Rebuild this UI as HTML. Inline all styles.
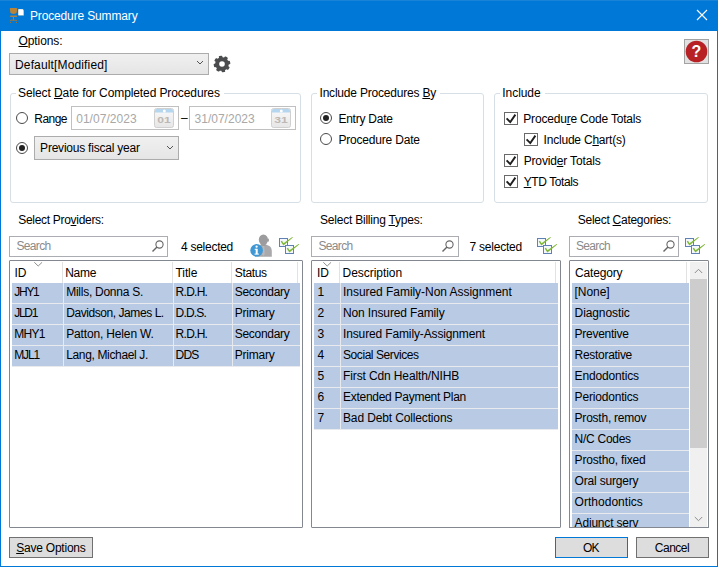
<!DOCTYPE html>
<html><head><meta charset="utf-8"><title>Procedure Summary</title>
<style>
html,body{margin:0;padding:0;background:#fff;}
body{width:718px;height:567px;overflow:hidden;font:12px "Liberation Sans",sans-serif;}
#win{position:relative;width:718px;height:567px;background:#fff;overflow:hidden;}
#win *{box-sizing:border-box;}
.a{position:absolute;}
.t{position:absolute;white-space:nowrap;font:12px/14px "Liberation Sans",sans-serif;}
.t u{text-decoration:underline;text-underline-offset:1px;text-decoration-thickness:1px;}
.gb{position:absolute;border:1px solid #d5dfe5;border-radius:3px;}
.gl{position:absolute;background:#fff;height:14px;}
.combo{position:absolute;border:1px solid #acacac;background:linear-gradient(#f0f0f0,#e5e5e5);}
.inp{position:absolute;border:1px solid #abadb3;background:#fff;}
.dinp{position:absolute;border:1px solid #c0c0c0;background:#fff;}
.rad{position:absolute;width:12px;height:12px;border:1px solid #4a4a4a;border-radius:50%;background:#fff;}
.rad.on::after{content:"";position:absolute;left:2px;top:2px;width:6px;height:6px;border-radius:50%;background:#222;}
.cb{position:absolute;width:14px;height:13px;border:1px solid #6a6a6a;background:#fff;}
.btn{position:absolute;border:1px solid #707070;background:#dddddd;}
.list{position:absolute;border:1px solid #828790;background:#fff;border-radius:1px;}
.row{position:absolute;height:21px;background:#b8cae4;border-bottom:1px solid #e9eaee;}
.vs{position:absolute;width:1px;background:#e9eaee;}
.hs{position:absolute;width:1px;background:#e2e2e2;}

</style></head>
<body>
<div id=win>
<!-- window frame -->
<div class=a style="left:0;top:0;width:718px;height:31px;background:#0078d7"></div>
<div class=a style="left:0;top:0;width:718px;height:1px;background:#1883d7"></div>
<div class=a style="left:0;top:31px;width:1px;height:536px;background:#0078d7"></div>
<div class=a style="left:717px;top:31px;width:1px;height:536px;background:#0078d7"></div>
<div class=a style="left:0;top:566px;width:718px;height:1px;background:#0078d7"></div>
<!-- title icon -->
<svg class=a style="left:8px;top:7px" width="18" height="17" viewBox="0 0 18 17">
 <path d="M2.6 1 H8.4 Q9.3 1 9.2 2 L8.7 5.2 Q8.3 7 5.5 7 Q2.7 7 2.3 5.2 L1.8 2 Q1.7 1 2.6 1Z" fill="#ba8336"/>
 <rect x="1.8" y="8.4" width="7.4" height="1.6" rx="0.8" fill="#b68238" opacity="0.92"/>
 <rect x="4.9" y="10" width="1.1" height="3.4" fill="#ad7830"/>
 <path d="M2 14.2 L2.6 13.2 L8.4 13.2 L9 14.2" stroke="#ad7830" stroke-width="0.9" fill="none"/>
 <circle cx="2.6" cy="15.4" r="0.65" fill="#a5722e"/>
 <circle cx="8.5" cy="15.4" r="0.65" fill="#a5722e"/>
 <rect x="10.4" y="2.3" width="5.4" height="6.3" fill="#ccd8c4"/>
 <rect x="10.4" y="2.3" width="4.8" height="5.7" fill="#fff"/>
 <path d="M14.6 2.3 L15.8 2.3 L15.8 3.5 Z" fill="#2f5f8f"/>
</svg>
<!-- close X -->
<svg class=a style="left:696px;top:9px" width="12" height="12" viewBox="0 0 12 12"><path d="M1 1 L11 11 M11 1 L1 11" stroke="#fff" stroke-width="1.1" fill="none"/></svg>

<!-- options combo -->
<div class=combo style="left:9px;top:53px;width:200px;height:22px"></div>
<svg class=a style="left:196px;top:60px" width="8" height="6" viewBox="0 0 8 6"><path d="M1 1 L4 4 L7 1" stroke="#555" stroke-width="1" fill="none"/></svg>
<!-- gear -->
<svg class=a style="left:213px;top:55px" width="18" height="18" viewBox="-9 -9 18 18">
 <g fill="#4b4c4e" transform="rotate(-11)">
  <circle r="6.8"/>
  <rect x="-1.8" y="-8.3" width="3.6" height="16.6" rx="0.9"/>
  <rect x="-1.8" y="-8.3" width="3.6" height="16.6" rx="0.9" transform="rotate(45)"/>
  <rect x="-1.8" y="-8.3" width="3.6" height="16.6" rx="0.9" transform="rotate(90)"/>
  <rect x="-1.8" y="-8.3" width="3.6" height="16.6" rx="0.9" transform="rotate(135)"/>
 </g>
 <circle r="2.8" fill="#fff"/>
</svg>
<!-- help button -->
<div class=a style="left:684px;top:39px;width:25px;height:25px;border:1px solid #a3a3a3;background:#e1e1e1"></div>
<svg class=a style="left:685px;top:40px" width="23" height="23" viewBox="0 0 23 23">
 <circle cx="11.5" cy="11.5" r="10.8" fill="#b72025"/>
 <text x="11.5" y="17" text-anchor="middle" font-family="Liberation Sans, sans-serif" font-weight="bold" font-size="16" fill="#fff">?</text>
</svg>

<!-- group boxes -->
<div class=gb style="left:10px;top:93px;width:291px;height:110px"></div>
<div class=gl style="left:16px;top:86px;width:208px"></div>
<div class=gb style="left:311px;top:93px;width:173px;height:110px"></div>
<div class=gl style="left:317px;top:86px;width:123px"></div>
<div class=gb style="left:494px;top:93px;width:214px;height:110px"></div>
<div class=gl style="left:500px;top:86px;width:45px"></div>

<!-- group 1 content -->
<div class=rad style="left:16px;top:112px"></div>
<div class=dinp style="left:71px;top:106px;width:108px;height:24px"></div>
<div class=dinp style="left:189px;top:106px;width:107px;height:24px"></div>
<svg class=a style="left:154px;top:108px" width="20" height="20" viewBox="0 0 20 20">
 <defs><linearGradient id="cg154" x1="0" y1="0" x2="0" y2="1"><stop offset="0" stop-color="#fafafa"/><stop offset="1" stop-color="#e6e6e6"/></linearGradient></defs>
 <rect x="0.5" y="0.5" width="19" height="19" rx="2" fill="url(#cg154)" stroke="#d0d0d0"/>
 <path d="M1 2.5 Q1 1 2.5 1 L17.5 1 Q19 1 19 2.5 L19 4.6 L1 4.6 Z" fill="#b4d6ee"/>
 <circle cx="10.3" cy="2.9" r="1.5" fill="#fff"/>
 <text x="10" y="15.2" text-anchor="middle" font-family="Liberation Sans, sans-serif" font-weight="bold" font-size="9.5" textLength="13.5" lengthAdjust="spacingAndGlyphs" fill="#bdb8b3">01</text>
</svg>
<svg class=a style="left:271px;top:108px" width="20" height="20" viewBox="0 0 20 20">
 <defs><linearGradient id="cg271" x1="0" y1="0" x2="0" y2="1"><stop offset="0" stop-color="#fafafa"/><stop offset="1" stop-color="#e6e6e6"/></linearGradient></defs>
 <rect x="0.5" y="0.5" width="19" height="19" rx="2" fill="url(#cg271)" stroke="#d0d0d0"/>
 <path d="M1 2.5 Q1 1 2.5 1 L17.5 1 Q19 1 19 2.5 L19 4.6 L1 4.6 Z" fill="#b4d6ee"/>
 <circle cx="10.3" cy="2.9" r="1.5" fill="#fff"/>
 <text x="10" y="15.2" text-anchor="middle" font-family="Liberation Sans, sans-serif" font-weight="bold" font-size="9.5" textLength="13.5" lengthAdjust="spacingAndGlyphs" fill="#bdb8b3">31</text>
</svg>
<div class="rad on" style="left:16px;top:142px"></div>
<div class=combo style="left:34px;top:136px;width:145px;height:24px"></div>
<svg class=a style="left:166px;top:145px" width="8" height="6" viewBox="0 0 8 6"><path d="M1 1 L4 4 L7 1" stroke="#555" stroke-width="1" fill="none"/></svg>

<!-- group 2 content -->
<div class="rad on" style="left:320px;top:112px"></div>
<div class=rad style="left:320px;top:133px"></div>

<!-- group 3 content -->
<div class=cb style="left:504px;top:112px"></div>
<div class=cb style="left:524px;top:133px"></div>
<div class=cb style="left:504px;top:154px"></div>
<div class=cb style="left:504px;top:175px"></div>
<svg class=a style="left:504px;top:112px" width="14" height="13" viewBox="0 0 14 13"><path d="M2.6 6.4 L6.3 10.1 L11.4 2.6" stroke="#1e1e1e" stroke-width="1.9" fill="none"/></svg>
<svg class=a style="left:524px;top:133px" width="14" height="13" viewBox="0 0 14 13"><path d="M2.6 6.4 L6.3 10.1 L11.4 2.6" stroke="#1e1e1e" stroke-width="1.9" fill="none"/></svg>
<svg class=a style="left:504px;top:154px" width="14" height="13" viewBox="0 0 14 13"><path d="M2.6 6.4 L6.3 10.1 L11.4 2.6" stroke="#1e1e1e" stroke-width="1.9" fill="none"/></svg>
<svg class=a style="left:504px;top:175px" width="14" height="13" viewBox="0 0 14 13"><path d="M2.6 6.4 L6.3 10.1 L11.4 2.6" stroke="#1e1e1e" stroke-width="1.9" fill="none"/></svg>

<!-- search boxes -->
<div class=inp style="left:9px;top:236px;width:159px;height:21px"></div>
<div class=inp style="left:311px;top:236px;width:148px;height:21px"></div>
<div class=inp style="left:569px;top:236px;width:110px;height:21px"></div>
<svg class=a style="left:151px;top:239px" width="14" height="14" viewBox="0 0 14 14"><circle cx="8.5" cy="5.5" r="3.6" fill="none" stroke="#666" stroke-width="1.1"/><path d="M6 8 L1.5 12.5" stroke="#666" stroke-width="1.4"/></svg>
<svg class=a style="left:441px;top:239px" width="14" height="14" viewBox="0 0 14 14"><circle cx="8.5" cy="5.5" r="3.6" fill="none" stroke="#666" stroke-width="1.1"/><path d="M6 8 L1.5 12.5" stroke="#666" stroke-width="1.4"/></svg>
<svg class=a style="left:662px;top:239px" width="14" height="14" viewBox="0 0 14 14"><circle cx="8.5" cy="5.5" r="3.6" fill="none" stroke="#666" stroke-width="1.1"/><path d="M6 8 L1.5 12.5" stroke="#666" stroke-width="1.4"/></svg>

<!-- person info icon -->
<svg class=a style="left:249px;top:234px" width="24" height="24" viewBox="0 0 24 24">
 <path d="M8.2 22.8 L8.2 15 Q8.2 12 10.6 11.2 L11.6 10.6 L17.2 10.6 L18.6 11.2 Q22.8 12.4 22.8 17 L22.8 22.8 Z" fill="#a9a9ab"/>
 <path d="M13.6 11.5 L15.2 11.5 L15.8 20 L14.4 22 L13 20 Z" fill="#b9b9bb"/>
 <ellipse cx="14.4" cy="5.8" rx="4.6" ry="5.2" fill="#9c9c9e"/>
 <rect x="18.3" y="4.6" width="1.6" height="3.2" rx="0.8" fill="#9c9c9e"/>
 <rect x="12.2" y="9.5" width="4.4" height="2.4" fill="#9c9c9e"/>
 <circle cx="7.6" cy="16.4" r="6.3" fill="#3f97d3"/>
 <rect x="6.7" y="14.8" width="2" height="5.4" fill="#fff"/>
 <rect x="5.7" y="14.8" width="2" height="1" fill="#fff"/>
 <rect x="5.5" y="19.6" width="4.4" height="1" fill="#fff"/>
 <circle cx="7.6" cy="12.7" r="1.15" fill="#fff"/>
</svg>
<!-- check-all icons -->
<svg class=a style="left:278px;top:236px" width="22" height="19" viewBox="0 0 22 19">
 <rect x="1.5" y="2.5" width="8" height="8" fill="#f4f7fb" stroke="#5f82b2" stroke-width="1"/>
 <rect x="7.5" y="9.5" width="8" height="8" fill="#f4f7fb" stroke="#5f82b2" stroke-width="1"/>
 <path d="M2.7 5.6 L4 4.7 L5.5 7.2 L14.3 0.9 L14.9 1.5 L5.4 9.5 Z" fill="#7db733"/>
 <path d="M8.7 12.6 L10 11.7 L11.5 14.2 L20.6 7.9 L21.2 8.5 L11.4 16.5 Z" fill="#7db733"/>
</svg>
<svg class=a style="left:536px;top:236px" width="22" height="19" viewBox="0 0 22 19">
 <rect x="1.5" y="2.5" width="8" height="8" fill="#f4f7fb" stroke="#5f82b2" stroke-width="1"/>
 <rect x="7.5" y="9.5" width="8" height="8" fill="#f4f7fb" stroke="#5f82b2" stroke-width="1"/>
 <path d="M2.7 5.6 L4 4.7 L5.5 7.2 L14.3 0.9 L14.9 1.5 L5.4 9.5 Z" fill="#7db733"/>
 <path d="M8.7 12.6 L10 11.7 L11.5 14.2 L20.6 7.9 L21.2 8.5 L11.4 16.5 Z" fill="#7db733"/>
</svg>
<svg class=a style="left:684px;top:236px" width="22" height="19" viewBox="0 0 22 19">
 <rect x="1.5" y="2.5" width="8" height="8" fill="#f4f7fb" stroke="#5f82b2" stroke-width="1"/>
 <rect x="7.5" y="9.5" width="8" height="8" fill="#f4f7fb" stroke="#5f82b2" stroke-width="1"/>
 <path d="M2.7 5.6 L4 4.7 L5.5 7.2 L14.3 0.9 L14.9 1.5 L5.4 9.5 Z" fill="#7db733"/>
 <path d="M8.7 12.6 L10 11.7 L11.5 14.2 L20.6 7.9 L21.2 8.5 L11.4 16.5 Z" fill="#7db733"/>
</svg>

<!-- providers list -->
<div class=list style="left:9px;top:260px;width:294px;height:268px"></div>
<div class=row style="left:12px;top:283px;width:288px"></div>
<div class=row style="left:12px;top:304px;width:288px"></div>
<div class=row style="left:12px;top:325px;width:288px"></div>
<div class=row style="left:12px;top:346px;width:288px"></div>
<div class=hs style="left:62px;top:262px;height:21px"></div>
<div class=hs style="left:172px;top:262px;height:21px"></div>
<div class=hs style="left:231px;top:262px;height:21px"></div>
<div class=hs style="left:297px;top:262px;height:21px"></div>
<div class=vs style="left:63px;top:283px;height:83px"></div>
<div class=vs style="left:173px;top:283px;height:83px"></div>
<div class=vs style="left:232px;top:283px;height:83px"></div>
<svg class=a style="left:34px;top:262px" width="9" height="5" viewBox="0 0 9 5"><path d="M0.3 0.3 L4.2 4 L8.1 0.3" stroke="#8e8e8e" stroke-width="1" fill="none"/></svg>

<!-- billing list -->
<div class=list style="left:311px;top:260px;width:250px;height:268px"></div>
<div class=row style="left:314px;top:283px;width:244px"></div>
<div class=row style="left:314px;top:304px;width:244px"></div>
<div class=row style="left:314px;top:325px;width:244px"></div>
<div class=row style="left:314px;top:346px;width:244px"></div>
<div class=row style="left:314px;top:367px;width:244px"></div>
<div class=row style="left:314px;top:388px;width:244px"></div>
<div class=row style="left:314px;top:409px;width:244px"></div>
<div class=hs style="left:339px;top:262px;height:21px"></div>
<div class=hs style="left:555px;top:262px;height:21px"></div>
<div class=vs style="left:340px;top:283px;height:146px"></div>
<svg class=a style="left:323px;top:262px" width="9" height="5" viewBox="0 0 9 5"><path d="M0.3 0.3 L4.2 4 L8.1 0.3" stroke="#8e8e8e" stroke-width="1" fill="none"/></svg>

<!-- categories list -->
<div class=list style="left:569px;top:260px;width:140px;height:268px;overflow:hidden" id=catlist></div>
<div class=a style="left:572px;top:283px;width:117px;height:244px;overflow:hidden">
 <div class=row style="left:0;top:0;width:118px"></div>
 <div class=row style="left:0;top:21px;width:118px"></div>
 <div class=row style="left:0;top:42px;width:118px"></div>
 <div class=row style="left:0;top:63px;width:118px"></div>
 <div class=row style="left:0;top:84px;width:118px"></div>
 <div class=row style="left:0;top:105px;width:118px"></div>
 <div class=row style="left:0;top:126px;width:118px"></div>
 <div class=row style="left:0;top:147px;width:118px"></div>
 <div class=row style="left:0;top:168px;width:118px"></div>
 <div class=row style="left:0;top:189px;width:118px"></div>
 <div class=row style="left:0;top:210px;width:118px"></div>
 <div class=row style="left:0;top:231px;width:118px"></div>
</div>
<div class=hs style="left:686px;top:262px;height:21px"></div>
<!-- scrollbar -->
<div class=a style="left:690px;top:262px;width:17px;height:265px;background:#f0f0f0"></div>
<div class=a style="left:690px;top:279px;width:17px;height:169px;background:#cdcdcd"></div>
<svg class=a style="left:694px;top:268px" width="9" height="6" viewBox="0 0 9 6"><path d="M0.8 5 L4.5 1.3 L8.2 5" stroke="#8c8c8c" stroke-width="1" fill="none"/></svg>
<svg class=a style="left:694px;top:516px" width="9" height="6" viewBox="0 0 9 6"><path d="M0.8 1 L4.5 4.7 L8.2 1" stroke="#8c8c8c" stroke-width="1" fill="none"/></svg>

<!-- buttons -->
<div class=btn style="left:9px;top:537px;width:84px;height:21px"></div>
<div class=btn style="left:555px;top:537px;width:73px;height:21px;border-color:#0078d7"></div>
<div class=btn style="left:636px;top:537px;width:73px;height:21px"></div>

<span class=t style='left:30.0px;top:9.0px;letter-spacing:-0.150px;color:#fff'>Procedure Summary</span>
<span class=t style='left:18.5px;top:34.0px;letter-spacing:-0.088px;color:#000'><u>O</u>ptions:</span>
<span class=t style='left:15.0px;top:58.0px;letter-spacing:0.144px;color:#000'>Default[Modified]</span>
<span class=t style='left:18.0px;top:86.0px;letter-spacing:-0.101px;color:#000'>Select <u>D</u>ate for Completed Procedures</span>
<span class=t style='left:34.3px;top:111.6px;letter-spacing:-0.535px;color:#000'>Range</span>
<span class=t style='left:76.2px;top:111.6px;letter-spacing:0.034px;color:#a8a8a8'>01/07/2023</span>
<span class=t style='left:194.5px;top:111.6px;letter-spacing:0.014px;color:#a8a8a8'>31/07/2023</span>
<span class=t style='left:181.0px;top:110.6px;letter-spacing:-0.688px;color:#000'>–</span>
<span class=t style='left:40.1px;top:141.2px;letter-spacing:-0.222px;color:#000'>Previous fiscal year</span>
<span class=t style='left:319.5px;top:86.0px;letter-spacing:-0.202px;color:#000'>Include Procedures <u>B</u>y</span>
<span class=t style='left:338.4px;top:112.0px;letter-spacing:-0.230px;color:#000'>Entry Date</span>
<span class=t style='left:338.4px;top:133.0px;letter-spacing:-0.189px;color:#000'>Procedure Date</span>
<span class=t style='left:502.3px;top:86.0px;letter-spacing:-0.058px;color:#000'>Include</span>
<span class=t style='left:523.3px;top:112.0px;letter-spacing:-0.193px;color:#000'>Procedu<u>r</u>e Code Totals</span>
<span class=t style='left:543.6px;top:133.0px;letter-spacing:-0.211px;color:#000'>Include C<u>h</u>art(s)</span>
<span class=t style='left:523.7px;top:154.0px;letter-spacing:-0.157px;color:#000'>Provid<u>e</u>r Totals</span>
<span class=t style='left:523.7px;top:175.0px;letter-spacing:-0.417px;color:#000'><u>Y</u>TD Totals</span>
<span class=t style='left:18.3px;top:213.0px;letter-spacing:-0.306px;color:#000'>Select Pro<u>v</u>iders:</span>
<span class=t style='left:320.0px;top:213.0px;letter-spacing:-0.218px;color:#000'>Select Billing <u>T</u>ypes:</span>
<span class=t style='left:577.8px;top:213.0px;letter-spacing:-0.270px;color:#000'>Select <u>C</u>ategories:</span>
<span class=t style='left:16.5px;top:239.0px;letter-spacing:-0.672px;color:#8a8a8a'>Search</span>
<span class=t style='left:318.5px;top:239.0px;letter-spacing:-0.672px;color:#8a8a8a'>Search</span>
<span class=t style='left:576.0px;top:239.0px;letter-spacing:-0.672px;color:#8a8a8a'>Search</span>
<span class=t style='left:181.0px;top:240.0px;letter-spacing:-0.270px;color:#000'>4 selected</span>
<span class=t style='left:469.5px;top:240.0px;letter-spacing:-0.220px;color:#000'>7 selected</span>
<span class=t style='left:14.6px;top:266.0px;letter-spacing:-0.200px;color:#000'>ID</span>
<span class=t style='left:65.2px;top:266.0px;letter-spacing:-0.254px;color:#000'>Name</span>
<span class=t style='left:175.5px;top:266.0px;letter-spacing:-0.087px;color:#000'>Title</span>
<span class=t style='left:234.8px;top:266.0px;letter-spacing:-0.339px;color:#000'>Status</span>
<span class=t style='left:14.3px;top:285.0px;letter-spacing:-1.286px;color:#000'>JHY1</span>
<span class=t style='left:66.2px;top:285.0px;letter-spacing:-0.260px;color:#000'>Mills, Donna S.</span>
<span class=t style='left:175.6px;top:285.0px;letter-spacing:-0.733px;color:#000'>R.D.H.</span>
<span class=t style='left:234.8px;top:285.0px;letter-spacing:-0.308px;color:#000'>Secondary</span>
<span class=t style='left:14.3px;top:306.0px;letter-spacing:-1.304px;color:#000'>JLD1</span>
<span class=t style='left:66.2px;top:306.0px;letter-spacing:-0.433px;color:#000'>Davidson, James L.</span>
<span class=t style='left:175.6px;top:306.0px;letter-spacing:-0.824px;color:#000'>D.D.S.</span>
<span class=t style='left:234.8px;top:306.0px;letter-spacing:-0.221px;color:#000'>Primary</span>
<span class=t style='left:14.3px;top:327.0px;letter-spacing:-0.736px;color:#000'>MHY1</span>
<span class=t style='left:66.2px;top:327.0px;letter-spacing:-0.153px;color:#000'>Patton, Helen W.</span>
<span class=t style='left:175.6px;top:327.0px;letter-spacing:-0.733px;color:#000'>R.D.H.</span>
<span class=t style='left:234.8px;top:327.0px;letter-spacing:-0.308px;color:#000'>Secondary</span>
<span class=t style='left:14.3px;top:348.0px;letter-spacing:-1.186px;color:#000'>MJL1</span>
<span class=t style='left:66.2px;top:348.0px;letter-spacing:-0.349px;color:#000'>Lang, Michael J.</span>
<span class=t style='left:175.6px;top:348.0px;letter-spacing:-0.848px;color:#000'>DDS</span>
<span class=t style='left:234.8px;top:348.0px;letter-spacing:-0.221px;color:#000'>Primary</span>
<span class=t style='left:317.0px;top:266.0px;letter-spacing:-0.200px;color:#000'>ID</span>
<span class=t style='left:342.6px;top:266.0px;letter-spacing:-0.048px;color:#000'>Description</span>
<span class=t style='left:317.4px;top:285.0px;letter-spacing:-0.187px;color:#000'>1</span>
<span class=t style='left:343.0px;top:285.0px;letter-spacing:-0.044px;color:#000'>Insured Family-Non Assignment</span>
<span class=t style='left:317.4px;top:306.0px;letter-spacing:-0.187px;color:#000'>2</span>
<span class=t style='left:343.0px;top:306.0px;letter-spacing:-0.141px;color:#000'>Non Insured Family</span>
<span class=t style='left:317.4px;top:327.0px;letter-spacing:-0.187px;color:#000'>3</span>
<span class=t style='left:343.0px;top:327.0px;letter-spacing:-0.136px;color:#000'>Insured Family-Assignment</span>
<span class=t style='left:317.4px;top:348.0px;letter-spacing:-0.187px;color:#000'>4</span>
<span class=t style='left:343.0px;top:348.0px;letter-spacing:-0.429px;color:#000'>Social Services</span>
<span class=t style='left:317.4px;top:369.0px;letter-spacing:-0.187px;color:#000'>5</span>
<span class=t style='left:343.0px;top:369.0px;letter-spacing:-0.119px;color:#000'>First Cdn Health/NIHB</span>
<span class=t style='left:317.4px;top:390.0px;letter-spacing:-0.187px;color:#000'>6</span>
<span class=t style='left:343.0px;top:390.0px;letter-spacing:-0.274px;color:#000'>Extended Payment Plan</span>
<span class=t style='left:317.4px;top:411.0px;letter-spacing:-0.187px;color:#000'>7</span>
<span class=t style='left:343.0px;top:411.0px;letter-spacing:-0.138px;color:#000'>Bad Debt Collections</span>
<span class=t style='left:575.0px;top:266.0px;letter-spacing:-0.175px;color:#000'>Category</span>
<span class=t style='left:574.6px;top:285.0px;letter-spacing:-0.060px;color:#000'>[None]</span>
<span class=t style='left:574.6px;top:306.0px;letter-spacing:-0.103px;color:#000'>Diagnostic</span>
<span class=t style='left:574.6px;top:327.0px;letter-spacing:-0.270px;color:#000'>Preventive</span>
<span class=t style='left:574.6px;top:348.0px;letter-spacing:-0.300px;color:#000'>Restorative</span>
<span class=t style='left:574.6px;top:369.0px;letter-spacing:-0.159px;color:#000'>Endodontics</span>
<span class=t style='left:574.6px;top:390.0px;letter-spacing:-0.187px;color:#000'>Periodontics</span>
<span class=t style='left:574.6px;top:411.0px;letter-spacing:-0.231px;color:#000'>Prosth, remov</span>
<span class=t style='left:574.6px;top:432.0px;letter-spacing:-0.276px;color:#000'>N/C Codes</span>
<span class=t style='left:574.6px;top:453.0px;letter-spacing:-0.170px;color:#000'>Prostho, fixed</span>
<span class=t style='left:574.6px;top:474.0px;letter-spacing:-0.186px;color:#000'>Oral surgery</span>
<span class=t style='left:574.6px;top:495.0px;letter-spacing:0.021px;color:#000'>Orthodontics</span>
<span class=t style='left:574.6px;top:516.0px;letter-spacing:-0.186px;color:#000'>Adjunct serv</span>
<span class=t style='left:16.2px;top:541.0px;letter-spacing:-0.221px;color:#000'><u>S</u>ave Options</span>
<span class=t style='left:583.0px;top:541.0px;letter-spacing:-0.772px;color:#000'>OK</span>
<span class=t style='left:654.8px;top:541.0px;letter-spacing:-0.493px;color:#000'>Cancel</span>
<!-- clip bottom of categories list -->
<div class=a style="left:569px;top:527px;width:140px;height:10px;background:#fff"></div>
<div class=a style="left:569px;top:527px;width:140px;height:1px;background:#828790"></div>

</div>
</body></html>
